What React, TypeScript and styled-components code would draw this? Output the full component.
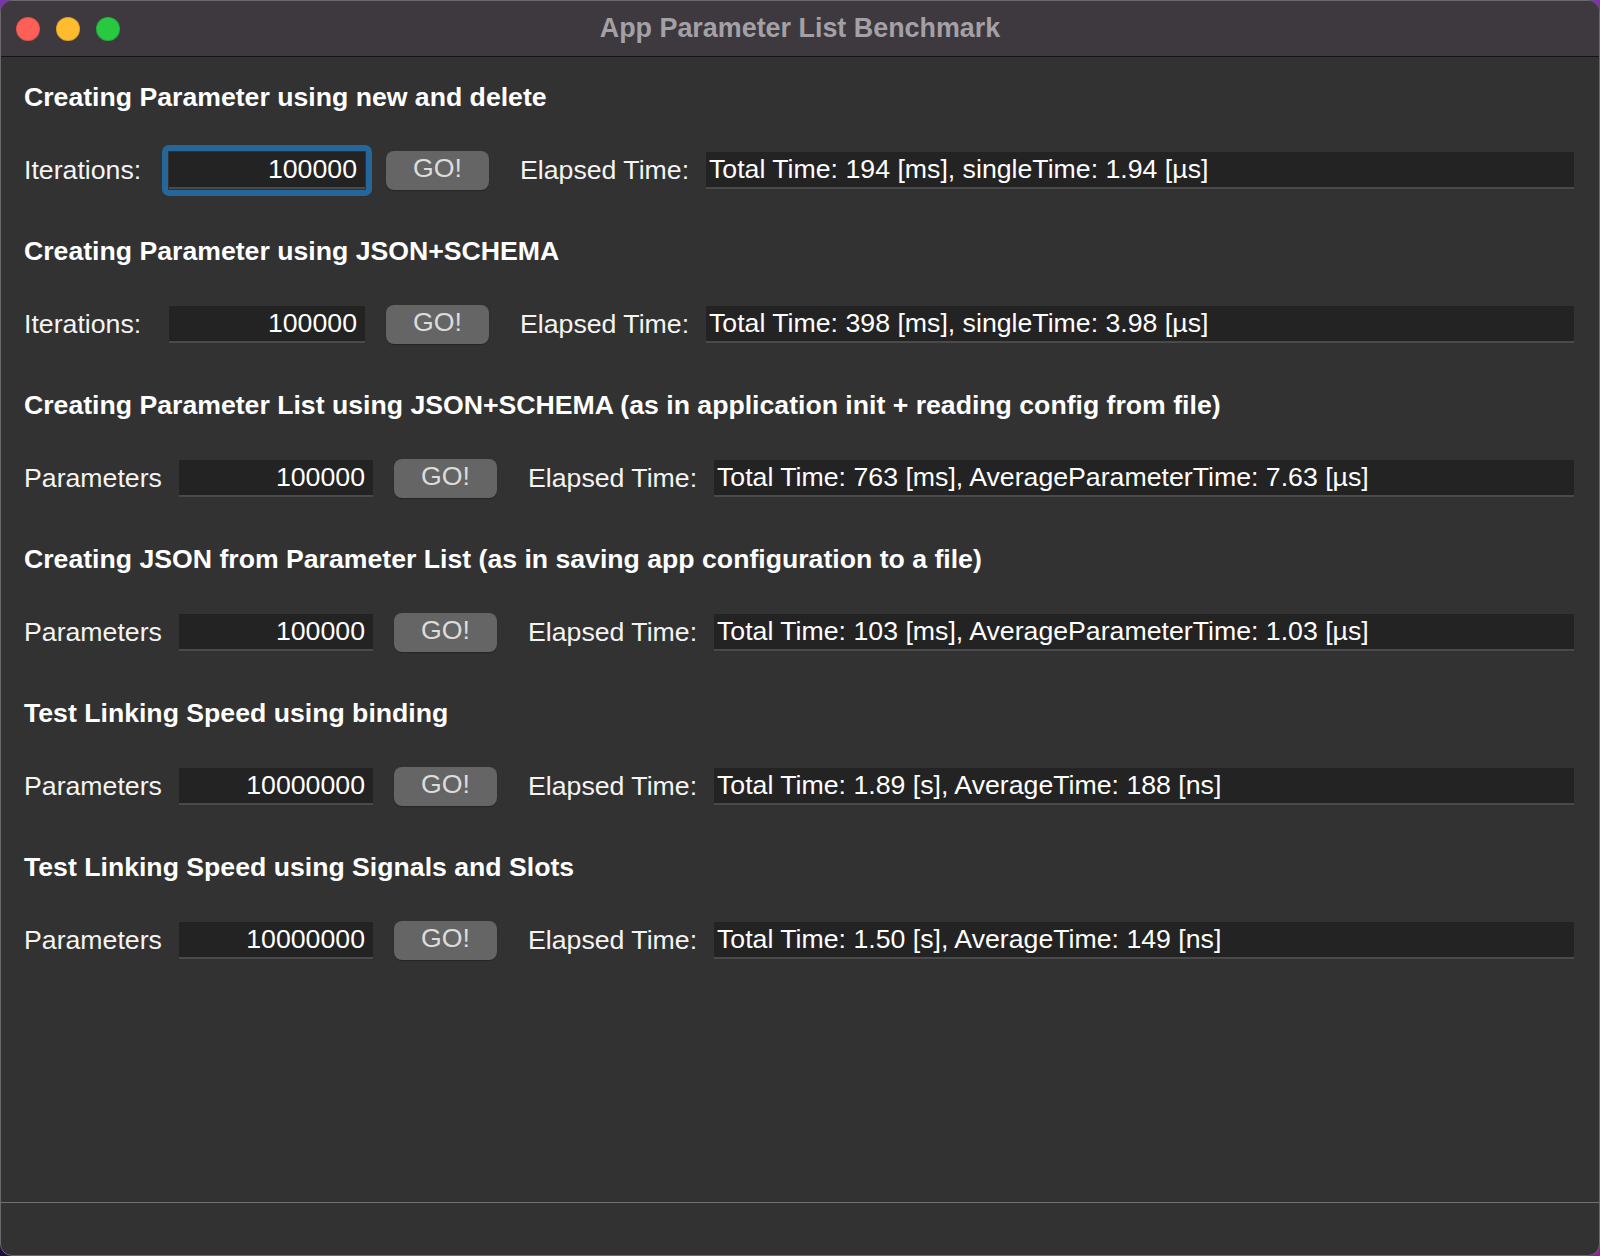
import React from 'react';
import styled, { createGlobalStyle } from 'styled-components';

const Global = createGlobalStyle`
  html, body {
    margin: 0;
    padding: 0;
    width: 1600px;
    height: 1256px;
    overflow: hidden;
  }
  body {
    background: linear-gradient(90deg, #7a35a6 0%, #6a3bb0 100%);
    font-family: "Liberation Sans", Arial, sans-serif;
  }
  #root {
    width: 1600px;
    height: 1256px;
    background: linear-gradient(90deg, #1b0f3f 0%, #3a1c66 50%, #8d2790 100%);
  }
`;

const Desktop = styled.div`
  width: 1600px;
  height: 1256px;
  background: linear-gradient(180deg, #7a35a6 0%, #6a3bb0 45%, rgba(0,0,0,0) 55%);
`;

const Window = styled.div`
  box-sizing: border-box;
  width: 1600px;
  height: 1256px;
  border: 1px solid #6a686c;
  border-radius: 12px;
  overflow: hidden;
  background: #323232;
  display: flex;
  flex-direction: column;
`;

const TitleBar = styled.div`
  box-sizing: border-box;
  height: 56px;
  flex: none;
  background: #3d393f;
  border-bottom: 1px solid #151515;
  display: grid;
  grid-template-columns: 1fr auto 1fr;
  align-items: center;
`;

const Lights = styled.div`
  display: flex;
  gap: 16px;
  padding-left: 15px;
  padding-top: 1px;
`;

const Light = styled.span<{ $color: string }>`
  width: 24px;
  height: 24px;
  border-radius: 50%;
  background: ${(p) => p.$color};
  box-shadow: inset 0 0 0 1px rgba(0, 0, 0, 0.12);
`;

const Title = styled.div`
  font-family: "Liberation Sans", Arial, sans-serif;
  font-weight: 700;
  font-size: 26.9px;
  color: #a3a0a6;
`;

const Main = styled.main`
  flex: 1;
  padding: 25px 25px 0 23px;
  display: flex;
  flex-direction: column;
  gap: 46px;
`;

const Section = styled.section`
  display: flex;
  flex-direction: column;
  gap: 37px;
`;

const Heading = styled.h2`
  margin: 0;
  font-family: "Liberation Sans", Arial, sans-serif;
  font-weight: 700;
  font-size: 26.65px;
  line-height: 31px;
  color: #ffffff;
`;

const Row = styled.div`
  display: flex;
  align-items: center;
  height: 40px;
  font-family: "Liberation Sans", Arial, sans-serif;
  font-size: 26.7px;
  color: #f4f4f4;
`;

const Label = styled.span<{ $width: number }>`
  flex: none;
  width: ${(p) => p.$width}px;
  white-space: nowrap;
`;

const Field = styled.div<{ $focused?: boolean; $width: number }>`
  position: relative;
  box-sizing: border-box;
  flex: none;
  width: ${(p) => p.$width}px;
  height: 37px;
  background: #232323;
  border-bottom: 2px solid #4a4a4a;
  display: flex;
  align-items: center;
  justify-content: flex-end;
  padding: 0 8px 0 0;
  color: #ffffff;
  &::before {
    content: '';
    display: ${(p) => (p.$focused ? 'block' : 'none')};
    position: absolute;
    left: -7px;
    right: -7px;
    top: -7px;
    bottom: -9px;
    border: 6px solid #25679a;
    border-radius: 7px;
    pointer-events: none;
  }
`;

const GoButton = styled.button`
  flex: none;
  margin-left: 21px;
  width: 103px;
  height: 39px;
  border: none;
  border-radius: 8px;
  background: #656565;
  box-shadow: 0 1px 1px rgba(0, 0, 0, 0.25);
  color: #dcdcdc;
  font-family: "Liberation Sans", Arial, sans-serif;
  font-size: 26.7px;
  padding: 0 0 3px;
`;

const Elapsed = styled.span`
  flex: none;
  margin-left: 31px;
  width: 186px;
  white-space: nowrap;
`;

const Output = styled.div`
  box-sizing: border-box;
  flex: 1;
  height: 37px;
  background: #232323;
  border-bottom: 2px solid #4a4a4a;
  display: flex;
  align-items: center;
  padding-left: 3px;
  color: #ffffff;
  white-space: nowrap;
`;

const StatusBar = styled.footer`
  box-sizing: border-box;
  flex: none;
  height: 53px;
  border-top: 1px solid #727272;
`;

type Bench = {
  title: string;
  label: string;
  labelWidth: number;
  fieldWidth: number;
  value: string;
  result: string;
  focused?: boolean;
};

const benches: Bench[] = [
  {
    title: 'Creating Parameter using new and delete',
    label: 'Iterations:',
    labelWidth: 145,
    fieldWidth: 196,
    value: '100000',
    result: 'Total Time: 194 [ms], singleTime: 1.94 [µs]',
    focused: true,
  },
  {
    title: 'Creating Parameter using JSON+SCHEMA',
    label: 'Iterations:',
    labelWidth: 145,
    fieldWidth: 196,
    value: '100000',
    result: 'Total Time: 398 [ms], singleTime: 3.98 [µs]',
  },
  {
    title:
      'Creating Parameter List using JSON+SCHEMA (as in application init + reading config from file)',
    label: 'Parameters',
    labelWidth: 155,
    fieldWidth: 194,
    value: '100000',
    result: 'Total Time: 763 [ms], AverageParameterTime: 7.63 [µs]',
  },
  {
    title: 'Creating JSON from Parameter List (as in saving app configuration to a file)',
    label: 'Parameters',
    labelWidth: 155,
    fieldWidth: 194,
    value: '100000',
    result: 'Total Time: 103 [ms], AverageParameterTime: 1.03 [µs]',
  },
  {
    title: 'Test Linking Speed using binding',
    label: 'Parameters',
    labelWidth: 155,
    fieldWidth: 194,
    value: '10000000',
    result: 'Total Time: 1.89 [s], AverageTime: 188 [ns]',
  },
  {
    title: 'Test Linking Speed using Signals and Slots',
    label: 'Parameters',
    labelWidth: 155,
    fieldWidth: 194,
    value: '10000000',
    result: 'Total Time: 1.50 [s], AverageTime: 149 [ns]',
  },
];

export default function App() {
  return (
    <>
      <Global />
      <Desktop>
        <Window>
          <TitleBar>
            <Lights>
              <Light $color="#fe5f57" />
              <Light $color="#febc2e" />
              <Light $color="#28c840" />
            </Lights>
            <Title>App Parameter List Benchmark</Title>
            <span />
          </TitleBar>
          <Main>
            {benches.map((b) => (
              <Section key={b.title}>
                <Heading>{b.title}</Heading>
                <Row>
                  <Label $width={b.labelWidth}>{b.label}</Label>
                  <Field $focused={b.focused} $width={b.fieldWidth}>
                    {b.value}
                  </Field>
                  <GoButton>GO!</GoButton>
                  <Elapsed>Elapsed Time:</Elapsed>
                  <Output>{b.result}</Output>
                </Row>
              </Section>
            ))}
          </Main>
          <StatusBar />
        </Window>
      </Desktop>
    </>
  );
}
